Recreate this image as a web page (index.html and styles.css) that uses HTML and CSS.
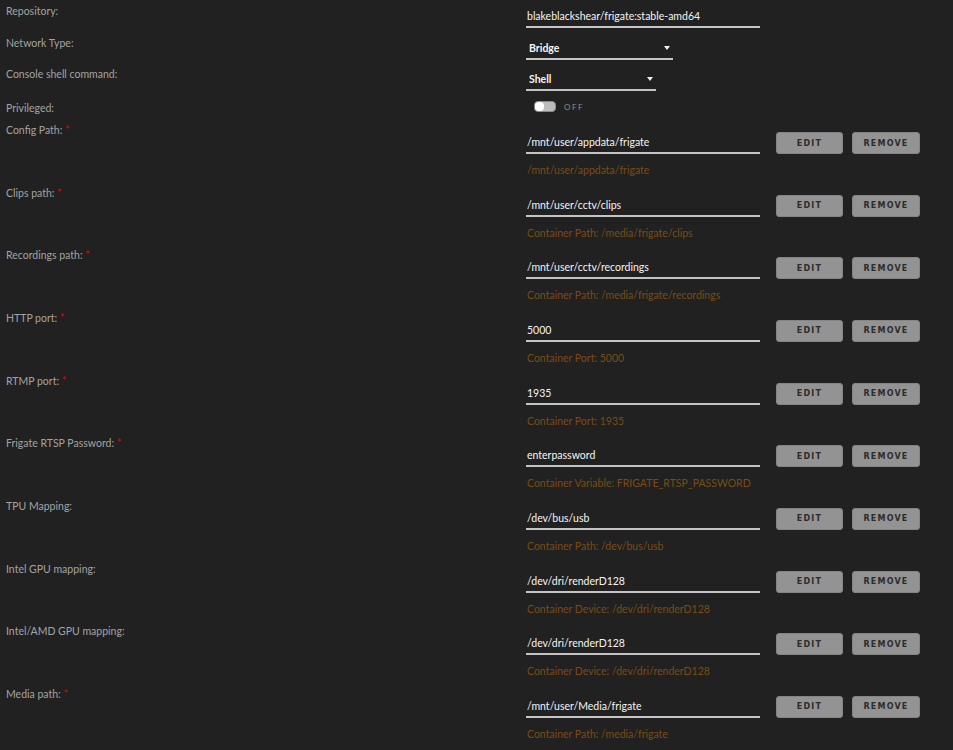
FILE: index.html
```html
<!DOCTYPE html>
<html lang="en">
<head>
    <meta charset="UTF-8">
    <title>Update Container - frigate</title>
    <link rel="stylesheet" href="styles.css">
</head>
<body>
    <form class="container-form">
        <div class="basic-row">
            <label class="field-label">Repository:</label>
            <div class="field-value">
                <input type="text" class="text-input wide" value="blakeblackshear/frigate:stable-amd64">
            </div>
        </div>
        <div class="basic-row">
            <label class="field-label">Network Type:</label>
            <div class="field-value">
                <span class="select-wrap network">
                    <select class="select-input">
                        <option>Bridge</option>
                        <option>Host</option>
                        <option>None</option>
                    </select>
                </span>
            </div>
        </div>
        <div class="basic-row">
            <label class="field-label">Console shell command:</label>
            <div class="field-value">
                <span class="select-wrap shell">
                    <select class="select-input">
                        <option>Shell</option>
                        <option>Bash</option>
                    </select>
                </span>
            </div>
        </div>
        <div class="basic-row privileged">
            <label class="field-label">Privileged:</label>
            <div class="field-value">
                <span class="switch"><span class="knob"></span></span>
                <span class="switch-text">OFF</span>
            </div>
        </div>

        <div id="config-list"></div>
    </form>

    <script>
        const configs = [
            { label: 'Config Path', required: true, value: '/mnt/user/appdata/frigate', note: '/mnt/user/appdata/frigate' },
            { label: 'Clips path', required: true, value: '/mnt/user/cctv/clips', note: 'Container Path: /media/frigate/clips' },
            { label: 'Recordings path', required: true, value: '/mnt/user/cctv/recordings', note: 'Container Path: /media/frigate/recordings' },
            { label: 'HTTP port', required: true, value: '5000', note: 'Container Port: 5000' },
            { label: 'RTMP port', required: true, value: '1935', note: 'Container Port: 1935' },
            { label: 'Frigate RTSP Password', required: true, value: 'enterpassword', note: 'Container Variable: FRIGATE_RTSP_PASSWORD' },
            { label: 'TPU Mapping', required: false, value: '/dev/bus/usb', note: 'Container Path: /dev/bus/usb' },
            { label: 'Intel GPU mapping', required: false, value: '/dev/dri/renderD128', note: 'Container Device: /dev/dri/renderD128' },
            { label: 'Intel/AMD GPU mapping', required: false, value: '/dev/dri/renderD128', note: 'Container Device: /dev/dri/renderD128' },
            { label: 'Media path', required: true, value: '/mnt/user/Media/frigate', note: 'Container Path: /media/frigate' }
        ];

        const list = document.getElementById('config-list');
        configs.forEach(cfg => {
            const row = document.createElement('div');
            row.className = 'config-row';
            row.innerHTML = `
                <label class="field-label">${cfg.label}:${cfg.required ? ' <span class="required">*</span>' : ''}</label>
                <div class="field-value">
                    <div class="config-line">
                        <input type="text" class="text-input wide" value="${cfg.value}">
                        <button type="button" class="config-btn edit">Edit</button>
                        <button type="button" class="config-btn remove">Remove</button>
                    </div>
                    <div class="config-note">${cfg.note}</div>
                </div>
            `;
            list.appendChild(row);
        });
    </script>
</body>
</html>
```

FILE: styles.css
```css
body {
    margin: 0;
    background: #212121;
    font-family: Lato, "Liberation Sans", sans-serif;
    font-size: 10.5px;
    color: #a0a0a0;
}

.container-form {
    width: 953px;
}

.basic-row,
.config-row {
    display: grid;
    grid-template-columns: 526px 1fr;
}

.basic-row {
    height: 31.5px;
}

.field-label {
    display: block;
    padding: 4px 0 0 6px;
    line-height: 14px;
    color: #a3a3a3;
}

.required {
    color: #e00000;
}

.basic-row .field-value {
    padding-top: 6px;
}

.text-input {
    box-sizing: border-box;
    height: 22px;
    margin: 0;
    padding: 0 0 0 1px;
    border: none;
    border-bottom: 2px solid #c4c4c4;
    background: transparent;
    color: #f4f4f4;
    font-family: Lato, "Liberation Sans", sans-serif;
    font-size: 10.5px;
    outline: none;
}

.text-input.wide {
    width: 234px;
}

.select-wrap {
    position: relative;
    display: inline-block;
}

.select-wrap::after {
    content: '';
    position: absolute;
    top: 8px;
    right: 3px;
    border-left: 3px solid transparent;
    border-right: 3px solid transparent;
    border-top: 4px solid #f2f2f2;
    pointer-events: none;
}

.select-input {
    box-sizing: border-box;
    height: 22px;
    margin: 0;
    padding: 0 0 0 3px;
    border: none;
    border-bottom: 2px solid #c4c4c4;
    border-radius: 0;
    background: transparent;
    color: #f4f4f4;
    font-family: Lato, "Liberation Sans", sans-serif;
    font-size: 10.5px;
    font-weight: bold;
    -webkit-appearance: none;
    appearance: none;
    outline: none;
}

.network .select-input {
    width: 147px;
}

.shell .select-input {
    width: 130px;
}

.privileged {
    height: 26.5px;
}

.privileged .field-label {
    padding-top: 6px;
}

.privileged .field-value {
    display: flex;
    align-items: center;
    gap: 8px;
    padding: 6.5px 0 0 8px;
    height: 11px;
}

.switch {
    position: relative;
    display: inline-block;
    box-sizing: border-box;
    width: 22px;
    height: 11px;
    border: 1px solid #8a8a8a;
    border-radius: 4px;
    background: #bdbdbd;
}

.knob {
    position: absolute;
    top: 0;
    left: 0;
    width: 9px;
    height: 9px;
    border-radius: 4px;
    background: #ffffff;
}

.switch-text {
    font-size: 8px;
    letter-spacing: 1.5px;
    color: #8c8c8c;
}

.config-row {
    height: 62.67px;
}

.config-row .field-label {
    padding-top: 2px;
}

.config-row .field-value {
    padding-top: 11px;
}

.config-line {
    display: flex;
    align-items: flex-start;
}

.config-btn {
    box-sizing: border-box;
    height: 22px;
    margin: 0;
    padding: 0;
    border: 1px solid #858585;
    border-radius: 3px;
    background: #939393;
    color: #2c2c2c;
    font-family: "DejaVu Sans", sans-serif;
    font-size: 8px;
    font-weight: bold;
    letter-spacing: 1.2px;
    text-transform: uppercase;
    cursor: pointer;
}

.config-btn.edit {
    width: 67px;
    margin-left: 16px;
}

.config-btn.remove {
    width: 68px;
    margin-left: 9px;
}

.config-note {
    margin-top: 9px;
    padding-left: 1px;
    line-height: 14px;
    color: #7a4c14;
}
```
